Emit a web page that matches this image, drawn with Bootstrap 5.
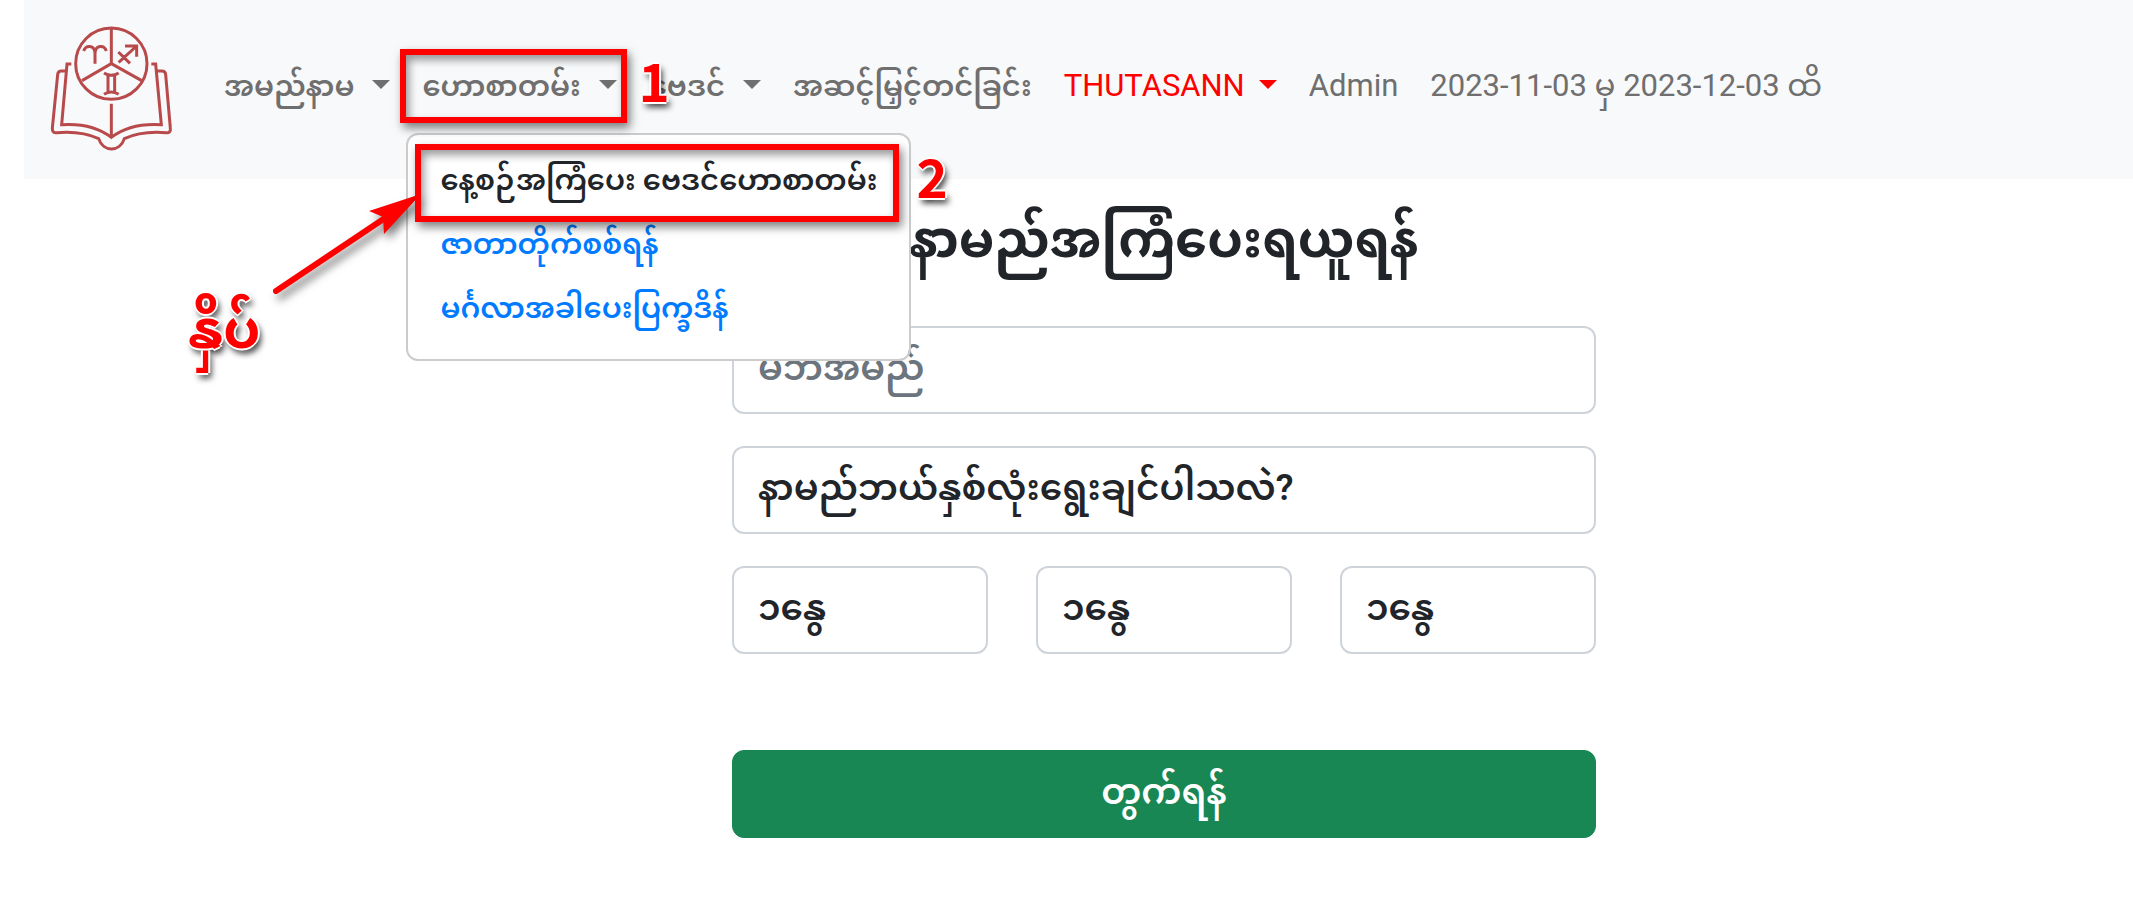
<!DOCTYPE html>
<html lang="my">
<head>
<meta charset="utf-8">
<meta name="viewport" content="width=device-width, initial-scale=1">
<title>THUTASANN</title>
<link rel="stylesheet" href="https://cdn.jsdelivr.net/npm/bootstrap@5.3.0/dist/css/bootstrap.min.css">
<style>
body{font-family:"Roboto","Noto Sans Myanmar","Noto Sans",sans-serif;font-size:32px;line-height:48px;background:#fff;overflow-x:hidden}
.topbar{margin-left:24px;background:#f8f9fa;padding:25px 26px 26px}
.brand-logo{width:124px;height:128px;display:block}
.topbar .navbar-nav{margin-left:34px;--bs-navbar-nav-link-padding-x:16px;--bs-nav-link-padding-x:16px}
.topbar .nav-link{padding:13px 16px 19px;line-height:48px;font-size:29px;font-weight:600;color:#6f6f6f;white-space:nowrap}
.topbar .nav-link.latin{font-size:31px;font-weight:400}
.topbar .dropdown-toggle::after{margin-left:18px;border-width:9px 9px 0;vertical-align:7px}
.topbar .nav-link.account{color:#f00}
.topbar .account::after{margin-left:14px}
.topbar .dropdown-menu{display:block;position:absolute;top:100%;left:0;width:505px;margin-top:4px;padding:16px 0;border:2px solid #ccc;border-radius:12px;font-size:29px}
.topbar .dropdown-item{padding:5px 32px 11px;line-height:48px;color:#007bff;font-weight:600}
.topbar .dropdown-item.current{color:#212529}
.callout-box{position:absolute;z-index:1010;border:6px solid #f00;box-shadow:3px 5px 9px rgba(0,0,0,.5),inset 3px 5px 9px rgba(0,0,0,.4);pointer-events:none}
.callout-menu{left:-6px;top:0;width:227px;height:74px}
.callout-item{left:7px;top:9px;width:484px;height:78px}
.callout-text{position:absolute;z-index:1010;color:#f00;font-family:"Noto Sans CJK SC","Noto Sans Myanmar",sans-serif;font-weight:700;font-size:53px;line-height:60px;text-shadow:-2px 0 #fff,2px 0 #fff,0 -2px #fff,0 2px #fff,3px 5px 6px rgba(0,0,0,.8)}
.step-one{left:232px;top:0}
.step-two{left:508px;top:10px}
.press-hint{left:-220px;top:160px}
.callout-arrow{position:absolute;left:-140px;top:44px;width:170px;height:130px;overflow:visible;filter:drop-shadow(4px 6px 4px rgba(0,0,0,.5))}
.page-body{padding-left:195px}
.name-form{width:864px;max-width:100%}
.name-form h1{font-size:51px;line-height:68px;margin:27px 0 52px;font-weight:700}
.name-form .form-control,.name-form .form-select,.name-form .btn{height:88px;font-size:36px;line-height:64px;border-radius:12px;padding:8px 24px 12px}
.name-form .form-control,.name-form .form-select{border:2px solid #ced4da;background-image:none;color:#212529;font-weight:600}
.name-form .form-control::placeholder{color:#6c757d;opacity:1}
.name-form .fields{gap:32px}
.name-form .trio{gap:48px}
.name-form .btn{margin-top:64px;background:#198754;font-weight:600}
</style>
</head>
<body>
<nav class="navbar navbar-expand topbar">
  <a class="navbar-brand p-0 m-0" href="#" aria-label="THUTASANN">
    <svg class="brand-logo" viewBox="150 75 372 384" fill="none" stroke="#b84a4c" stroke-width="9">
      <circle cx="334" cy="191" r="107"/>
      <path d="M334 84V191L246 242M334 191L425 242"/>
      <path d="M251 153C257 134 284 134 285 160V191M285 160C286 134 313 134 319 153M356 187L410 138M375 138H410V170M355 156L390 190"/>
      <path d="M312 219Q334 233 356 219M312 283Q334 269 356 283M324 225V277M344 225V277"/>
      <path d="M214 192H201L185 374Q277 368 334 412Q391 368 484 374L467 192H454M334 311V412"/>
      <path d="M199 213H184Q174 213 173 224L157 384Q156 399 170 398Q245 392 296 416C309 457 360 457 373 416Q424 392 499 398Q513 399 511 384L497 224Q496 213 486 213H471"/>
    </svg>
  </a>
  <ul class="navbar-nav align-items-center">
    <li class="nav-item dropdown"><a class="nav-link dropdown-toggle" href="#">အမည်နာမ</a></li>
    <li class="nav-item dropdown">
      <a class="nav-link dropdown-toggle" href="#" aria-expanded="true">ဟောစာတမ်း</a>
      <div class="dropdown-menu show">
        <a class="dropdown-item current" href="#">နေ့စဉ်အကြံပေး ဗေဒင်ဟောစာတမ်း</a>
        <a class="dropdown-item" href="#">ဇာတာတိုက်စစ်ရန်</a>
        <a class="dropdown-item" href="#">မင်္ဂလာအခါပေးပြက္ခဒိန်</a>
        <span class="callout-box callout-item"></span>
        <span class="callout-text step-two">2</span>
        <svg class="callout-arrow" viewBox="0 0 170 130"><path d="M8 112L120 37" stroke="#f00" stroke-width="6" stroke-linecap="round"/><path d="M153 15L101 32L115 38L116 55Z" fill="#f00"/></svg>
        <span class="callout-text press-hint">နှိပ်</span>
      </div>
      <span class="callout-box callout-menu"></span>
      <span class="callout-text step-one">1</span>
    </li>
    <li class="nav-item dropdown"><a class="nav-link dropdown-toggle" href="#">ဗေဒင်</a></li>
    <li class="nav-item"><a class="nav-link" href="#">အဆင့်မြှင့်တင်ခြင်း</a></li>
    <li class="nav-item dropdown"><a class="nav-link latin dropdown-toggle account" href="#">THUTASANN</a></li>
    <li class="nav-item"><a class="nav-link latin" href="#">Admin</a></li>
    <li class="nav-item"><a class="nav-link latin" href="#">2023-11-03 မှ 2023-12-03 ထိ</a></li>
  </ul>
</nav>
<main class="page-body d-flex justify-content-center">
  <form class="name-form">
    <h1 class="text-center">နာမည်အကြံပေးရယူရန်</h1>
    <div class="fields d-flex flex-column">
      <input class="form-control" type="text" placeholder="မိဘအမည်" aria-label="မိဘအမည်">
      <select class="form-select" aria-label="နာမည်ဘယ်နှစ်လုံး"><option>နာမည်ဘယ်နှစ်လုံးရွေးချင်ပါသလဲ?</option></select>
      <div class="trio d-flex">
        <select class="form-select" aria-label="၁"><option>၁နွေ</option></select>
        <select class="form-select" aria-label="၂"><option>၁နွေ</option></select>
        <select class="form-select" aria-label="၃"><option>၁နွေ</option></select>
      </div>
      <button class="btn btn-success" type="button">တွက်ရန်</button>
    </div>
  </form>
</main>
<script src="https://cdn.jsdelivr.net/npm/bootstrap@5.3.0/dist/js/bootstrap.bundle.min.js"></script>
</body>
</html>
